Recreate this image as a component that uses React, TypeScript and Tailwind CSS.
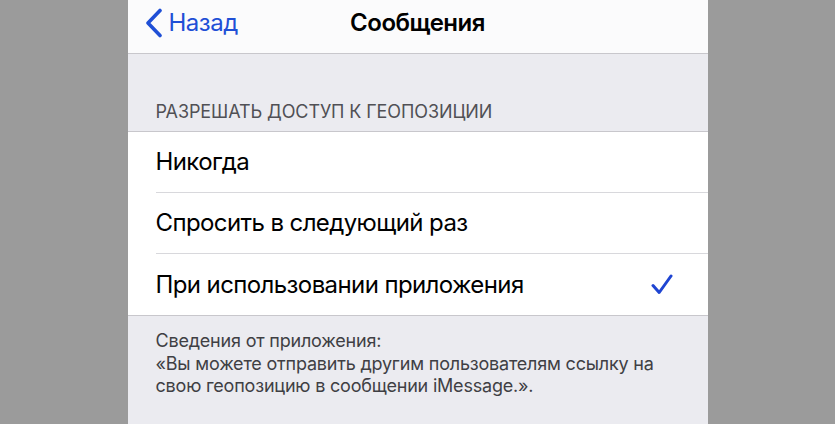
import React from "react";

const rows = [
  { label: "Никогда", checked: false },
  { label: "Спросить в следующий раз", checked: false },
  { label: "При использовании приложения", checked: true },
];

function BackChevron() {
  return (
    <svg width="18" height="30" viewBox="0 0 18 30" fill="none">
      <path
        d="M15 2.5 L3 15 L15 27.5"
        stroke="#1f4fd6"
        strokeWidth="3.6"
        strokeLinecap="round"
        strokeLinejoin="round"
      />
    </svg>
  );
}

function Check() {
  return (
    <svg width="22" height="21" viewBox="0 0 22 21" fill="none">
      <path
        d="M2 11.5 L8.2 18.5 L20 2"
        stroke="#1f45d2"
        strokeWidth="3"
        strokeLinecap="round"
        strokeLinejoin="round"
      />
    </svg>
  );
}

export default function App() {
  return (
    <div
      className="flex h-[424px] w-full justify-center overflow-hidden bg-[#9b9b9b]"
      style={{ fontFamily: "Inter, 'Noto Sans', sans-serif" }}
    >
      <div className="flex w-[580px] flex-col bg-[#ebebf0]">
        {/* navigation bar */}
        <div className="grid h-[54px] shrink-0 grid-cols-[1fr_auto_1fr] items-center border-b border-[#c8c7cc] bg-[#fbfbfc]">
          <div className="flex items-center pl-[17px] pb-[7px]">
            <BackChevron />
            <span className="ml-[6px] text-[24px] leading-none tracking-[-0.5px] text-[#1f4fd6]">
              Назад
            </span>
          </div>
          <div className="pb-[8px] text-[24px] font-semibold leading-none tracking-[-0.5px] text-black">
            Сообщения
          </div>
          <div />
        </div>

        {/* section header */}
        <div className="flex h-[77px] shrink-0 items-end px-[28px] pb-[8px]">
          <span className="text-[18px] leading-[22px] tracking-[-0.1px] text-[#505055]">
            РАЗРЕШАТЬ ДОСТУП К ГЕОПОЗИЦИИ
          </span>
        </div>

        {/* options list */}
        <div className="shrink-0 border-y border-[#c8c7cc] bg-white">
          {rows.map((row, i) => (
            <div key={row.label} className="pl-[28px]">
              <div
                className={
                  "flex h-[61px] items-center justify-between pr-[35px] " +
                  (i < rows.length - 1 ? "border-b border-[#d8d8dc]" : "")
                }
              >
                <span className="text-[24px] leading-none tracking-[-0.6px] text-black">
                  {row.label}
                </span>
                {row.checked && <Check />}
              </div>
            </div>
          ))}
        </div>

        {/* footer note */}
        <div className="px-[28px] pt-[14px] text-[18px] leading-[22.5px] tracking-[-0.2px] text-[#3f3f44]">
          <p>Сведения от приложения:</p>
          <p>
            «Вы можете отправить другим пользователям ссылку на свою
            геопозицию в сообщении iMessage.».
          </p>
        </div>
      </div>
    </div>
  );
}
